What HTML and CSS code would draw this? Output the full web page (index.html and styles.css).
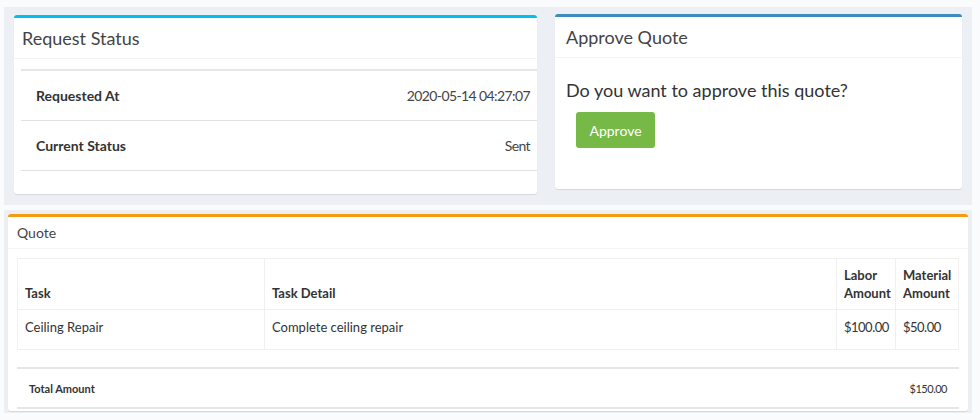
FILE: index.html
```html
<!DOCTYPE html>
<html lang="en">
<head>
  <meta charset="UTF-8">
  <title>Quote Request</title>
  <link rel="stylesheet" href="styles.css">
</head>
<body>

  <div class="band top-band">
    <div class="box box-info status-box">
      <div class="box-header"><h3 class="box-title">Request Status</h3></div>
      <div class="box-body">
        <table class="status-table">
          <thead><tr><th></th><th></th></tr></thead>
          <tbody>
            <tr><td class="label">Requested At</td><td class="value">2020-05-14 04:27:07</td></tr>
            <tr><td class="label">Current Status</td><td class="value">Sent</td></tr>
          </tbody>
        </table>
      </div>
    </div>

    <div class="box box-primary approve-box">
      <div class="box-header"><h3 class="box-title">Approve Quote</h3></div>
      <div class="box-body">
        <h4 class="question">Do you want to approve this quote?</h4>
        <button class="btn-approve">Approve</button>
      </div>
    </div>
  </div>

  <div class="band bottom-band">
    <div class="box box-warning quote-box">
      <div class="box-header"><h3 class="box-title">Quote</h3></div>
      <div class="box-body">
        <table class="quote-table">
          <thead>
            <tr>
              <th class="col-task">Task</th>
              <th class="col-detail">Task Detail</th>
              <th class="col-labor">Labor Amount</th>
              <th class="col-material">Material Amount</th>
            </tr>
          </thead>
          <tbody>
            <tr>
              <td>Ceiling Repair</td>
              <td>Complete ceiling repair</td>
              <td class="money">$100.00</td>
              <td class="money">$50.00</td>
            </tr>
          </tbody>
        </table>

        <table class="total-table">
          <tr>
            <th>Total Amount</th>
            <td class="money">$150.00</td>
          </tr>
        </table>
      </div>
    </div>
  </div>

</body>
</html>
```

FILE: styles.css
```css
body {
  margin: 0;
  background: #fafbfd;
  font-family: Lato, "Source Sans Pro", sans-serif;
  font-size: 14px;
  color: #333;
}

.band {
  width: 968px;
  margin-left: 4px;
  background: #ecf0f5;
  box-sizing: border-box;
}

.top-band {
  margin-top: 7px;
  padding: 7px 10px 12px 10px;
  display: flex;
  align-items: flex-start;
  gap: 18px;
  height: 198px;
}

.bottom-band {
  margin-top: 5px;
  padding: 4px 4px 2px 4px;
  height: 203px;
}

/* boxes */
.box {
  background: #fff;
  border-top: 3px solid #d2d6de;
  border-radius: 3px;
  box-shadow: 0 1px 1px rgba(0, 0, 0, 0.1);
}

.box-info { border-top-color: #00c0ef; }
.box-primary { border-top-color: #3c8dbc; }
.box-warning { border-top-color: #f39c12; }

.box-header {
  border-bottom: 1px solid #f4f4f4;
}

.box-title {
  margin: 0;
  font-weight: normal;
  font-size: 18px;
  color: #444;
}

.money {
  letter-spacing: -0.5px;
}

/* request status */
.status-box {
  width: 523px;
  margin-top: 1px;
}

.status-box .box-header {
  height: 40px;
  padding-left: 8px;
  display: flex;
  align-items: center;
}

.status-box .box-body {
  padding: 10px 0 11px 7px;
}

.status-table {
  width: 100%;
  border-collapse: collapse;
  margin-bottom: 12px;
}

.status-table thead th {
  padding: 0;
  height: 0;
  border-bottom: 2px solid #e6e6e6;
}

.status-table td {
  height: 49px;
  padding: 0;
  border-bottom: 1px solid #e2e2e2;
  font-size: 14px;
}

.status-table .label {
  padding-left: 15px;
  font-weight: bold;
}

.status-table .value {
  text-align: right;
  padding-right: 7px;
  color: #444;
  letter-spacing: -0.6px;
}

/* approve */
.approve-box {
  width: 407px;
  height: 172px;
}

.approve-box .box-header {
  height: 40px;
  padding-left: 11px;
  display: flex;
  align-items: center;
}

.approve-box .box-body {
  padding: 21px 11px 0 11px;
}

.question {
  margin: 0 0 11px;
  font-size: 18px;
  font-weight: normal;
  color: #333;
}

.btn-approve {
  margin-left: 10px;
  width: 79px;
  height: 36px;
  border: none;
  border-radius: 3px;
  background: #76b947;
  color: #fff;
  font-family: inherit;
  font-size: 14px;
  cursor: pointer;
}

/* quote */
.quote-box {
  height: 194px;
}

.quote-box .box-header {
  height: 31px;
  padding-left: 9px;
  display: flex;
  align-items: center;
}

.quote-box .box-title {
  font-size: 14px;
}

.quote-box .box-body {
  padding: 9px 9px 0 9px;
}

.quote-table {
  width: 100%;
  table-layout: fixed;
  border-collapse: collapse;
  margin-bottom: 17px;
}

.quote-table th,
.quote-table td {
  border: 1px solid #f0f0f0;
  padding: 7px 7px;
  text-align: left;
  font-size: 13px;
  line-height: 18px;
}

.quote-table th {
  vertical-align: bottom;
}

.quote-table td {
  vertical-align: top;
  padding-top: 8px;
  height: 24px;
}

.col-task { width: 232px; }
.col-labor { width: 44px; }
.col-material { width: 48px; }

.total-table {
  width: 100%;
  border-collapse: collapse;
  border-top: 2px solid #e6e6e6;
  border-bottom: 2px solid #e6e6e6;
}

.total-table th,
.total-table td {
  height: 38px;
  padding: 0 12px;
  font-size: 11px;
}

.total-table th {
  text-align: left;
}

.total-table td {
  text-align: right;
}
```
